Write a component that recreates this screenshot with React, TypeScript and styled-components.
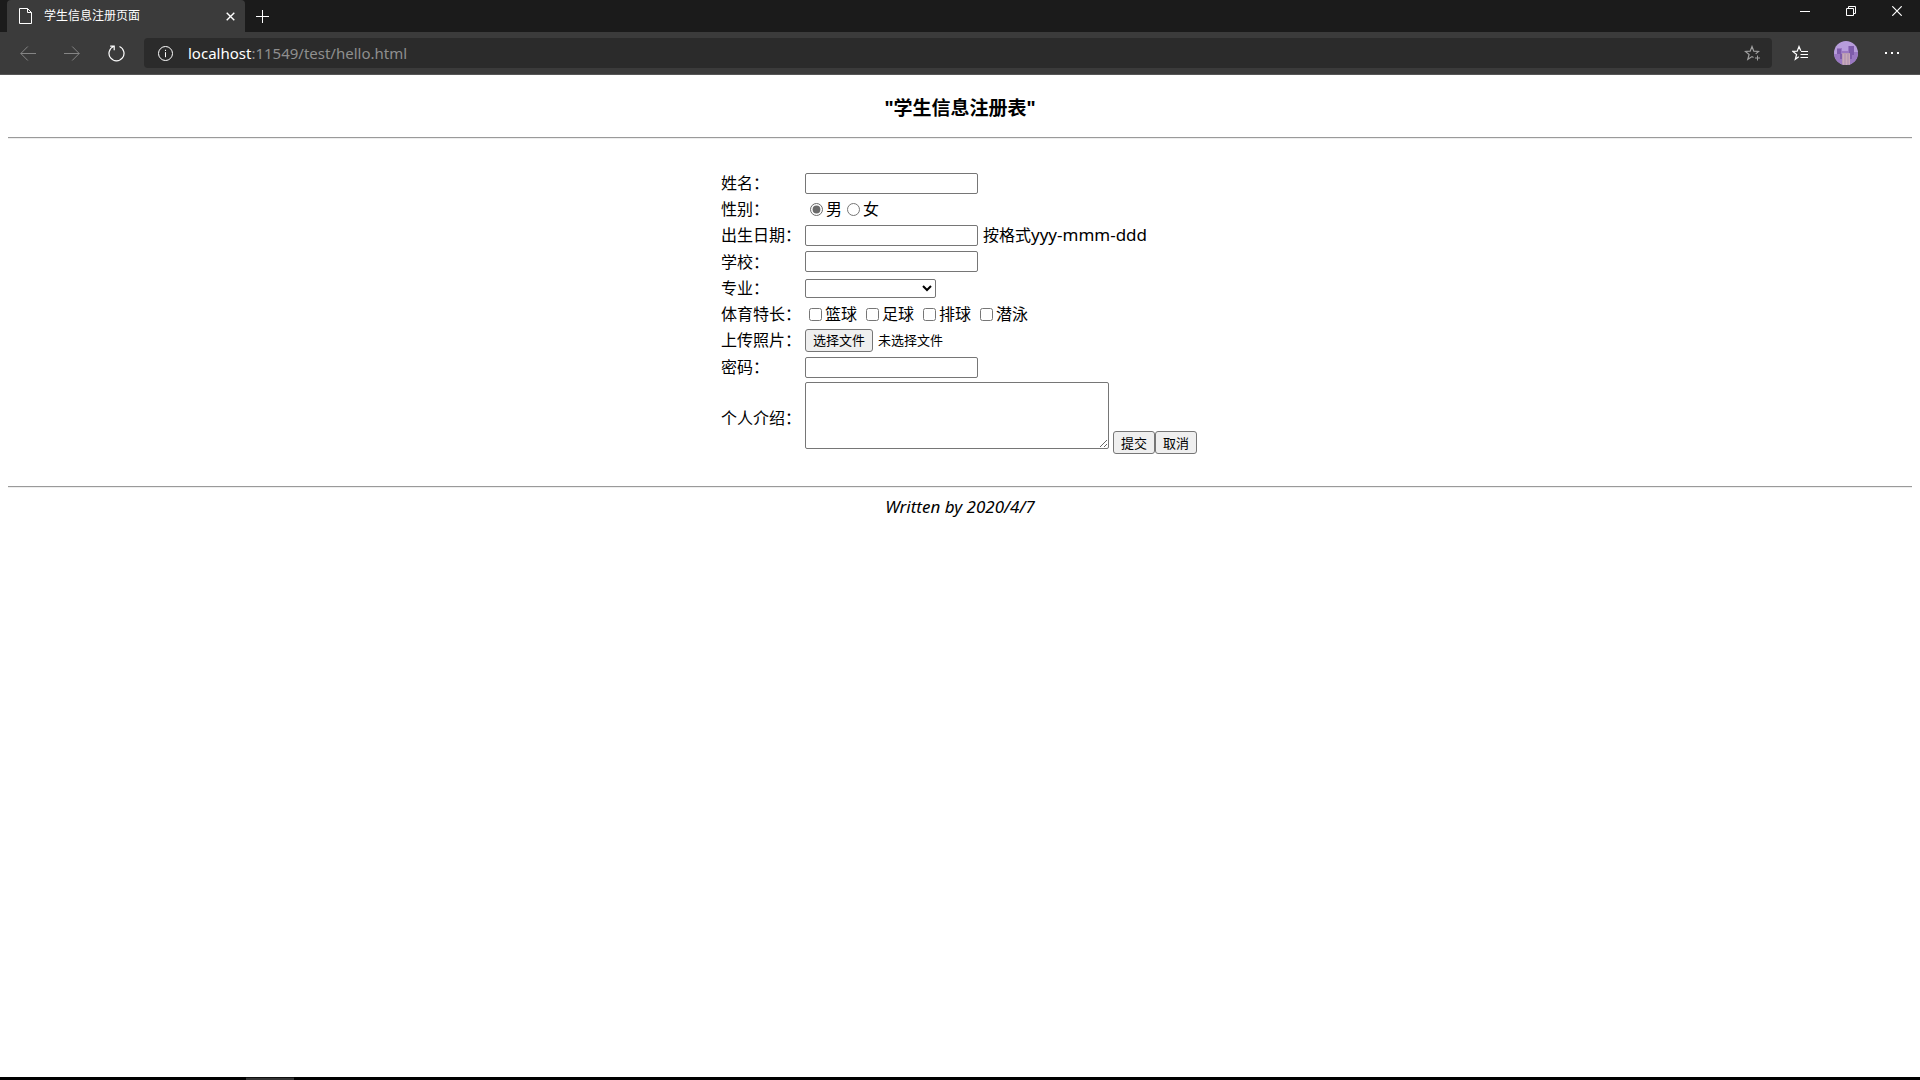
import React, { useRef } from "react";
import styled, { createGlobalStyle } from "styled-components";

const GlobalStyle = createGlobalStyle`
  * { box-sizing: border-box; }
  body {
    margin: 0;
    background: #fff;
    color: #000;
    font: 16px/24px "Noto Sans", "Noto Sans CJK SC", sans-serif;
  }
`;

const Screen = styled.div`
  display: flex;
  flex-direction: column;
  min-height: 100vh;
`;

const TitleBar = styled.header`
  display: flex;
  height: 32px;
  padding-left: 7px;
  background: #1b1b1b;
`;

const Tab = styled.div`
  display: flex;
  align-items: center;
  width: 238px;
  padding: 0 5px 0 12px;
  border-radius: 4px 4px 0 0;
  background: #3b3b3b;
  color: #fff;
  font-size: 12px;
`;

const TabTitle = styled.span`
  flex: 1;
  margin-left: 12px;
`;

const IconButton = styled.button<{ $width: number; $height: number; $color?: string }>`
  display: flex;
  flex: none;
  align-items: center;
  justify-content: center;
  width: ${(p) => p.$width}px;
  height: ${(p) => p.$height}px;
  padding: 0;
  border: 0;
  background: none;
  color: ${(p) => p.$color || "#fff"};
`;

const WindowControls = styled.div`
  display: flex;
  margin-left: auto;
`;

const Toolbar = styled.nav`
  display: flex;
  align-items: center;
  height: 43px;
  padding: 0 5px 0 6px;
  border-bottom: 1px solid #565656;
  background: #3b3b3b;
`;

const AddressBar = styled.div`
  display: flex;
  flex: 1;
  align-items: center;
  height: 30px;
  margin: 0 5px 0 6px;
  padding-left: 6px;
  border-radius: 4px;
  background: #2b2b2b;
`;

const Url = styled.div`
  flex: 1;
  margin-left: 8px;
  color: #8f8f8f;
  font-size: 15px;
`;

const Host = styled.span`
  color: #fff;
`;

const Page = styled.main`
  flex: 1;
  padding: 21px 8px;
`;

const Heading = styled.h3`
  margin: 0 0 17px;
  font-size: 19px;
  line-height: 24px;
  text-align: center;
`;

const Rule = styled.hr`
  height: 2px;
  margin: 0;
  border: 0;
  border-top: 1px solid #9a9a9a;
  border-bottom: 1px solid #eee;
`;

const Form = styled.form`
  display: flex;
  justify-content: center;
  padding: 30px 0;
`;

const Fields = styled.table`
  border-spacing: 2px;
`;

const Row = styled.tr<{ $height?: number }>`
  height: ${(p) => p.$height || 24}px;
`;

const NameCell = styled.th`
  width: 82px;
  padding: 0;
  font-weight: 400;
  text-align: left;
`;

const ValueCell = styled.td`
  padding: 0;
`;

const Line = styled.div<{ $gap?: number; $indent?: number }>`
  display: flex;
  align-items: center;
  gap: ${(p) => p.$gap || 0}px;
  padding-left: ${(p) => p.$indent || 0}px;
`;

const TextInput = styled.input`
  width: 173px;
  height: 21px;
  padding: 1px 2px;
  border: 1px solid #767676;
  border-radius: 2px;
  background: #fff;
`;

const Select = styled.select`
  width: 131px;
  height: 19px;
  border: 1px solid #767676;
  border-radius: 2px;
  background: #fff;
`;

const Latin = styled.span`
  font-size: 17px;
`;

const Choice = styled.label`
  display: flex;
  align-items: center;
  gap: 3px;
`;

const Tick = styled.input`
  width: 13px;
  height: 13px;
  margin: 0;
  accent-color: #6b6b6b;
`;

const Button = styled.button`
  height: 23px;
  padding: 0 7px;
  border: 1px solid #767676;
  border-radius: 3px;
  background: #efefef;
  color: #000;
  font: 13px/20px "Noto Sans", "Noto Sans CJK SC", sans-serif;
`;

const FileStatus = styled.span`
  font-size: 13px;
`;

const Bio = styled.textarea`
  display: block;
  width: 304px;
  height: 67px;
  padding: 2px;
  border: 1px solid #767676;
  border-radius: 2px;
  background: #fff;
`;

const BioLine = styled.div`
  display: flex;
  align-items: flex-start;
  gap: 4px;
  height: 72px;
  padding-right: 2px;
`;

const Actions = styled.div`
  display: flex;
  align-self: flex-end;
`;

const Footer = styled.footer`
  margin-top: 7px;
  font-size: 17px;
  font-style: italic;
  text-align: center;
`;

const Taskbar = styled.div`
  height: 3px;
  padding-left: 246px;
  background: #000;
`;

const ActiveApp = styled.div`
  width: 48px;
  height: 3px;
  border-top: 1px solid #111;
  background: #333;
`;

const Icon = ({ w, h, children }: { w: number; h: number; children: React.ReactNode }) => (
  <svg width={w} height={h} viewBox={`0 0 ${w} ${h}`} fill="none" stroke="currentColor" aria-hidden="true">
    {children}
  </svg>
);

const sports = ["篮球", "足球", "排球", "潜泳"];

export default function App() {
  const fileRef = useRef<HTMLInputElement>(null);
  return (
    <Screen>
      <GlobalStyle />
      <TitleBar>
        <Tab>
          <Icon w={13} h={16}>
            <path d="M.5.5h8l4 4v11H.5zM8.500.5v4h4" />
          </Icon>
          <TabTitle>学生信息注册页面</TabTitle>
          <IconButton type="button" aria-label="关闭标签页" $width={20} $height={32}>
            <Icon w={9} h={9}>
              <path d="M.7.7l7.600 7.600M8.300.7L.7 8.300" strokeWidth="1.400" />
            </Icon>
          </IconButton>
        </Tab>
        <IconButton type="button" aria-label="新建标签页" $width={35} $height={32}>
          <Icon w={13} h={13}>
            <path d="M6.500 0v13M0 6.500h13" />
          </Icon>
        </IconButton>
        <WindowControls>
          <IconButton type="button" aria-label="最小化" $width={46} $height={22}>
            <Icon w={10} h={11}>
              <path d="M0 5.500h10" />
            </Icon>
          </IconButton>
          <IconButton type="button" aria-label="还原" $width={46} $height={22}>
            <Icon w={10} h={10}>
              <path d="M.5 2.500h7v7h-7zM2.500 2.500v-2h7v7h-2" />
            </Icon>
          </IconButton>
          <IconButton type="button" aria-label="关闭" $width={46} $height={22}>
            <Icon w={10} h={10}>
              <path d="M.3.3l9.400 9.400M9.700.3L.3 9.700" strokeWidth="1.200" />
            </Icon>
          </IconButton>
        </WindowControls>
      </TitleBar>
      <Toolbar>
        <IconButton type="button" aria-label="后退" $width={44} $height={42} $color="#858585">
          <Icon w={16} h={15}>
            <path d="M.8 7.500H16M7.800.5l-7 7 7 7" />
          </Icon>
        </IconButton>
        <IconButton type="button" aria-label="前进" $width={44} $height={42} $color="#858585">
          <Icon w={16} h={15}>
            <path d="M15.200 7.500H0M8.200.5l7 7-7 7" />
          </Icon>
        </IconButton>
        <IconButton type="button" aria-label="刷新" $width={44} $height={42}>
          <Icon w={17} h={17}>
            <path d="M11.500 1.500A7.500 7.500 0 1 1 5.500 1.500M2.200 1.200h4v4" strokeWidth="1.200" />
          </Icon>
        </IconButton>
        <AddressBar>
          <IconButton type="button" aria-label="网站信息" $width={30} $height={30}>
            <Icon w={15} h={15}>
              <circle cx="7.500" cy="7.500" r="7" />
              <path d="M7.500 6.200v5M7.500 3.800v1.200" />
            </Icon>
          </IconButton>
          <Url>
            <Host>localhost</Host>:11549/test/hello.html
          </Url>
          <IconButton type="button" aria-label="添加收藏" $width={40} $height={30} $color="#a0a0a0">
            <Icon w={16} h={16}>
              <path d="M9.500 12.500L8 11.600l-4.200 2.700 1.300-4.800L1.300 6.400l4.900-.3L8 1.500l1.800 4.600 4.900.3-3 2.500" strokeWidth="1.200" />
              <path d="M13.500 10.500v5M11 13h5" />
            </Icon>
          </IconButton>
        </AddressBar>
        <IconButton type="button" aria-label="收藏夹" $width={46} $height={42}>
          <Icon w={16} h={16}>
            <path d="M6.800 11.800l-3.500 2.500 1.300-4.800L.8 6.400l4.400-.3L7 1.500l1.800 4.300M9 6.500h7M8.500 9.500H16M8.500 12.500H16" strokeWidth="1.200" />
          </Icon>
        </IconButton>
        <IconButton type="button" aria-label="个人资料" $width={46} $height={42}>
          <svg width="24" height="24" viewBox="0 0 24 24" aria-hidden="true">
            <defs>
              <clipPath id="avatar">
                <circle cx="12" cy="12" r="12" />
              </clipPath>
            </defs>
            <g clipPath="url(#avatar)">
              <path fill="#b79ddb" d="M0 0h24v24H0z" />
              <path fill="#9a78c2" d="M0 13h3V7h5v3h6V5h6v6h4v13H0z" />
              <path fill="#7e5cab" d="M3 8h4v5H3zM15 5h5v9h-5zM6 13h2v5H6zM16 14h2v4h-2z" />
              <path fill="#b89bb4" d="M8 12h8v12H8z" />
              <path stroke="#c8a9b8" d="M9.500 13v11M12.500 13v11M15.500 13v11" />
            </g>
          </svg>
        </IconButton>
        <IconButton type="button" aria-label="更多" $width={46} $height={42}>
          <Icon w={14} h={2}>
            <path d="M0 1h2M6 1h2M12 1h2" strokeWidth="2" />
          </Icon>
        </IconButton>
      </Toolbar>

      <Page>
        <Heading>"学生信息注册表"</Heading>
        <Rule />
        <Form onSubmit={(e) => e.preventDefault()}>
          <Fields>
            <tbody>
              <Row>
                <NameCell><label htmlFor="name">姓名：</label></NameCell>
                <ValueCell><Line><TextInput id="name" /></Line></ValueCell>
              </Row>
              <Row>
                <NameCell>性别：</NameCell>
                <ValueCell>
                  <Line $gap={5} $indent={5}>
                    <Choice><Tick type="radio" name="sex" defaultChecked />男</Choice>
                    <Choice><Tick type="radio" name="sex" />女</Choice>
                  </Line>
                </ValueCell>
              </Row>
              <Row>
                <NameCell><label htmlFor="birth">出生日期：</label></NameCell>
                <ValueCell>
                  <Line $gap={5}>
                    <TextInput id="birth" />
                    <span>按格式<Latin>yyy-mmm-ddd</Latin></span>
                  </Line>
                </ValueCell>
              </Row>
              <Row $height={25}>
                <NameCell><label htmlFor="school">学校：</label></NameCell>
                <ValueCell><Line><TextInput id="school" /></Line></ValueCell>
              </Row>
              <Row>
                <NameCell><label htmlFor="major">专业：</label></NameCell>
                <ValueCell><Line><Select id="major"><option></option></Select></Line></ValueCell>
              </Row>
              <Row>
                <NameCell>体育特长：</NameCell>
                <ValueCell>
                  <Line $gap={9} $indent={4}>
                    {sports.map((s) => (
                      <Choice key={s}><Tick type="checkbox" />{s}</Choice>
                    ))}
                  </Line>
                </ValueCell>
              </Row>
              <Row>
                <NameCell><label htmlFor="photo">上传照片：</label></NameCell>
                <ValueCell>
                  <Line $gap={5}>
                    <input ref={fileRef} id="photo" type="file" hidden />
                    <Button type="button" onClick={() => fileRef.current?.click()}>选择文件</Button>
                    <FileStatus>未选择文件</FileStatus>
                  </Line>
                </ValueCell>
              </Row>
              <Row $height={26}>
                <NameCell><label htmlFor="password">密码：</label></NameCell>
                <ValueCell><Line><TextInput id="password" type="password" /></Line></ValueCell>
              </Row>
              <Row>
                <NameCell><label htmlFor="bio">个人介绍：</label></NameCell>
                <ValueCell>
                  <BioLine>
                    <Bio id="bio" />
                    <Actions>
                      <Button type="submit">提交</Button>
                      <Button type="reset">取消</Button>
                    </Actions>
                  </BioLine>
                </ValueCell>
              </Row>
            </tbody>
          </Fields>
        </Form>
        <Rule />
        <Footer>Written by 2020/4/7</Footer>
      </Page>
      <Taskbar>
        <ActiveApp />
      </Taskbar>
    </Screen>
  );
}
